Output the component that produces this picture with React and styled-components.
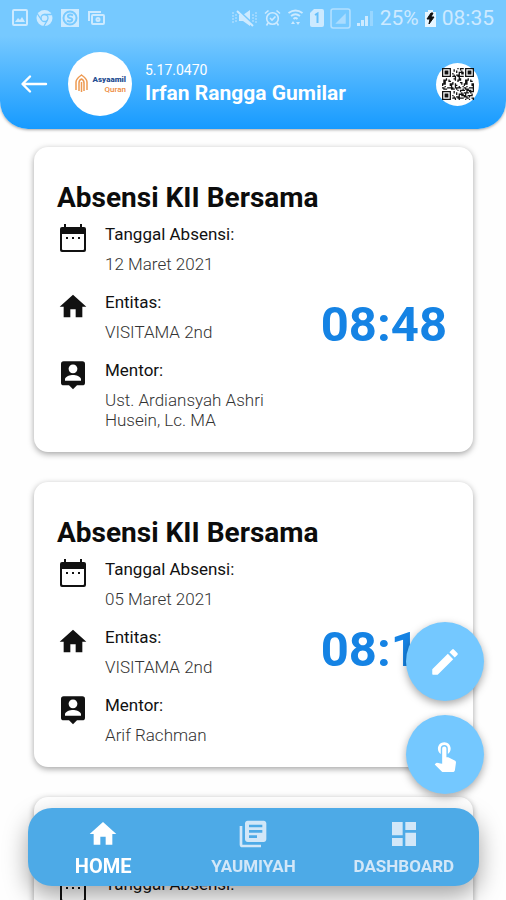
import React, { useState } from 'react';
import styled, { createGlobalStyle } from 'styled-components';
import { MdHome, MdDashboard, MdLibraryBooks, MdTouchApp } from 'react-icons/md';

const GlobalStyle = createGlobalStyle`
  * {
    box-sizing: border-box;
  }
  body {
    margin: 0;
    background: #fefefe;
    font-family: Roboto, "Liberation Sans", sans-serif;
  }
  button {
    font-family: inherit;
  }
`;

const Screen = styled.div`
  height: 100vh;
  display: flex;
  flex-direction: column;
  overflow: hidden;
`;

const Header = styled.header`
  padding-bottom: 13px;
  border-radius: 0 0 28px 28px;
  background: linear-gradient(#76c9ff 28%, #169aff);
  box-shadow: 0 1px 3px rgba(0, 0, 0, 0.35);
  color: #fff;
`;

const StatusBar = styled.div`
  display: flex;
  justify-content: space-between;
  align-items: center;
  height: 36px;
  padding: 0 12px;
  color: #cdeaff;
`;

const StatusGroup = styled.div`
  display: flex;
  align-items: center;
  gap: ${(props) => props.$gap}px;
`;

const StatusText = styled.span`
  font-size: 21px;
  line-height: 24px;
`;

const TopBar = styled.div`
  display: flex;
  align-items: center;
  padding: 16px 27px 0 20px;
`;

const IconButton = styled.button`
  display: flex;
  padding: 0;
  border: none;
  background: none;
  color: inherit;
  cursor: pointer;
`;

const Avatar = styled.div`
  display: flex;
  align-items: center;
  justify-content: center;
  width: 64px;
  height: 64px;
  margin: 0 13px 0 20px;
  border-radius: 50%;
  background: #fff;
`;

const User = styled.div`
  flex: 1;
`;

const UserId = styled.div`
  font-size: 14px;
  line-height: 18px;
`;

const UserName = styled.h1`
  margin: 0;
  font-size: 21px;
  font-weight: 700;
  line-height: 28px;
`;

const QrButton = styled(IconButton)`
  align-items: center;
  justify-content: center;
  width: 43px;
  height: 43px;
  border-radius: 50%;
  background: #fff;
  color: #111;
`;

const List = styled.main`
  flex: 1;
  min-height: 0;
  display: flex;
  flex-direction: column;
  gap: 30px;
  padding: 18px 33px 0 34px;
  overflow: hidden;
`;

const Card = styled.article`
  flex-shrink: 0;
  padding: 35px 26px 22px 23px;
  border-radius: 14px;
  background: #fff;
  box-shadow: 0 2px 6px rgba(0, 0, 0, 0.36);
`;

const CardTitle = styled.h2`
  margin: 0 0 5px;
  font-size: 28px;
  font-weight: 700;
  line-height: 32px;
  color: #0c0c0c;
`;

const CardBody = styled.div`
  display: flex;
  align-items: center;
  justify-content: space-between;
`;

const Details = styled.div`
  display: flex;
  flex-direction: column;
  gap: 18px;
  padding-top: 5px;
`;

const Detail = styled.div`
  display: flex;
  gap: 16px;
  color: #111;
`;

const DetailText = styled.dl`
  width: 180px;
  margin: 0;
  font-size: 17px;
  line-height: 20px;
`;

const Label = styled.dt`
  margin-bottom: 10px;
  color: #111;
`;

const Value = styled.dd`
  margin: 0;
  font-weight: 300;
  color: #333;
`;

const Time = styled.time`
  font-size: 49px;
  font-weight: 700;
  line-height: 60px;
  color: #1583e4;
`;

const Fabs = styled.div`
  position: fixed;
  right: 22px;
  bottom: 106px;
  display: flex;
  flex-direction: column;
  gap: 14px;
`;

const Fab = styled(IconButton)`
  align-items: center;
  justify-content: center;
  width: 78px;
  height: 79px;
  border-radius: 50%;
  background: #74c8ff;
  color: #fff;
  box-shadow: 0 3px 8px rgba(0, 0, 0, 0.35);
`;

const BottomNav = styled.nav`
  position: fixed;
  left: 28px;
  right: 27px;
  bottom: 14px;
  display: flex;
  height: 78px;
  border-radius: 24px;
  background: #4daae7;
  box-shadow: 0 10px 24px rgba(0, 0, 0, 0.36);
`;

const Tab = styled.button`
  flex: 1;
  display: flex;
  flex-direction: column;
  align-items: center;
  gap: 4px;
  padding: 10px 0 0;
  border: none;
  background: none;
  color: ${(props) => (props.$active ? '#fff' : '#d2e7f8')};
  font-size: ${(props) => (props.$active ? 20 : 17)}px;
  font-weight: 700;
  line-height: 24px;
  cursor: pointer;
`;

const records = [
  { id: 1, date: '12 Maret 2021', entity: 'VISITAMA 2nd', mentor: 'Ust. Ardiansyah Ashri Husein, Lc. MA', time: '08:48' },
  { id: 2, date: '05 Maret 2021', entity: 'VISITAMA 2nd', mentor: 'Arif Rachman', time: '08:17' },
  { id: 3, date: '26 Februari 2021', entity: 'VISITAMA 2nd', mentor: 'Arif Rachman', time: '08:30' },
];

const tabs = [
  { name: 'HOME', Icon: MdHome },
  { name: 'YAUMIYAH', Icon: MdLibraryBooks },
  { name: 'DASHBOARD', Icon: MdDashboard },
];

const CalendarIcon = () => (
  <svg width="32" height="32" viewBox="0 0 32 32" fill="currentColor" aria-hidden="true">
    <path d="M7 0h2v3h14V0h2v3h2q2 0 2 2v21q0 2-2 2H5q-2 0-2-2V5q0-2 2-2h2zM5 10v15q0 1 1 1h20q1 0 1-1V10z" fillRule="evenodd" />
    <path d="M9 13h2v2H9zM15 13h2v2h-2zM21 13h2v2h-2z" />
  </svg>
);

const HomeIcon = () => (
  <svg width="32" height="32" viewBox="0 0 24 24" fill="currentColor" aria-hidden="true">
    <path d="M10 19v-6h4v6h5v-8h3L12 2 2 11h3v8z" />
  </svg>
);

const PersonPinIcon = () => (
  <svg width="32" height="32" viewBox="0 0 24 24" fill="currentColor" aria-hidden="true">
    <path d="M19 1H5a2 2 0 0 0-2 2v14a2 2 0 0 0 2 2h4l3 3 3-3h4a2 2 0 0 0 2-2V3a2 2 0 0 0-2-2zm-7 2.300c1.900 0 3.300 1.500 3.300 3.300S13.900 10 12 10 8.700 8.500 8.700 6.600 10.100 3.300 12 3.300zM18 15.500H6v-1c0-2.200 4-3.300 6-3.300s6 1.100 6 3.300z" />
  </svg>
);

const PencilIcon = () => (
  <svg width="34" height="34" viewBox="0 0 24 24" fill="currentColor" aria-hidden="true">
    <path d="M3 17.500v3q0 .5.500.5h3q.3 0 .5-.2L17.800 10 14 6.200 3.200 17q-.2.200-.2.500zM20.700 7.100a1 1 0 0 0 0-1.500l-2.300-2.300a1 1 0 0 0-1.500 0L15.100 5.100l3.800 3.800z" />
  </svg>
);

const BackIcon = () => (
  <svg width="28" height="28" viewBox="0 0 28 28" fill="none" stroke="currentColor" strokeWidth="2.400" strokeLinecap="round" strokeLinejoin="round" aria-hidden="true">
    <path d="M26 14H3M10 6.500L2.500 14L10 21.500" />
  </svg>
);

const Logo = () => (
  <svg width="56" height="28" viewBox="0 0 56 28" role="img" aria-label="Asyaamil Quran">
    <g fill="none" stroke="#ee9a52" strokeWidth="1.500">
      <path d="M4 20V12Q4 9 9.500 5Q15 9 15 12V20" />
      <path d="M7 21V13Q7 10 9.500 9Q12 10 12 13V21M9.500 12V22" />
    </g>
    <text x="54" y="12" textAnchor="end" fontSize="8" fontWeight="900" fill="#1f4e92">Asyaamil</text>
    <text x="54" y="22" textAnchor="end" fontSize="8" fontWeight="500" fill="#ee8a3c">Quran</text>
  </svg>
);

const QR_SIZE = 25;

// the three finder squares, then a fixed scatter of modules for the rest
const isDark = (x, y) => {
  const corners = [[0, 0], [QR_SIZE - 7, 0], [0, QR_SIZE - 7]];
  for (const [cx, cy] of corners) {
    const dx = x - cx;
    const dy = y - cy;
    if (dx >= -1 && dx <= 7 && dy >= -1 && dy <= 7) {
      const ring = Math.max(Math.abs(dx - 3), Math.abs(dy - 3));
      return ring === 3 || ring <= 1;
    }
  }
  return ((x * x * 7 + y * y * 13 + x * y * 5 + x * 3) % 17) < 8;
};

const QrIcon = () => {
  let d = '';
  for (let y = 0; y < QR_SIZE; y++) {
    for (let x = 0; x < QR_SIZE; x++) {
      if (isDark(x, y)) d += `M${x} ${y}h1v1h-1z`;
    }
  }
  return (
    <svg width="32" height="32" viewBox="0 0 25 25" fill="currentColor" aria-hidden="true">
      <path d={d} />
    </svg>
  );
};

const NotificationIcons = () => (
  <>
    <svg width="16" height="18" viewBox="0 0 16 18" fill="none" stroke="currentColor" strokeWidth="2">
      <rect x="1" y="1" width="14" height="15" rx="1" />
      <path d="M3 13l3-4 2 2 2-3 3 5z" fill="currentColor" stroke="none" />
    </svg>
    <svg width="17" height="18" viewBox="0 0 17 18">
      <circle cx="8.500" cy="9" r="8" fill="currentColor" />
      <g fill="none" stroke="#76c9ff" strokeWidth="1.300">
        <circle cx="8.500" cy="9" r="3.500" />
        <path d="M8.500 5.500H16M5.500 11L1.500 5M11.500 11L8 17" />
      </g>
    </svg>
    <svg width="18" height="18" viewBox="0 0 18 18">
      <rect width="18" height="18" fill="currentColor" />
      <circle cx="9" cy="9" r="6.500" fill="none" stroke="#76c9ff" strokeWidth="2" />
      <path d="M12 6.500Q9 4.500 7 6.500Q6.500 8.500 9 9Q12 9.500 11 11.500Q9 13.500 6 11.500" fill="none" stroke="#76c9ff" strokeWidth="2" />
    </svg>
    <svg width="18" height="16" viewBox="0 0 18 16" fill="none" stroke="currentColor" strokeWidth="2">
      <path d="M2 11V2H14" />
      <rect x="5" y="5" width="12" height="9" rx="1" />
      <circle cx="11" cy="9.500" r="1.500" />
    </svg>
  </>
);

const SystemIcons = () => (
  <>
    <svg width="26" height="18" viewBox="0 0 26 18" fill="currentColor">
      <path d="M7 6h4l7-5v16l-7-5H7z" />
      <path d="M1 3v12M4 5v8M21 5v8M24 3v12" fill="none" stroke="currentColor" strokeWidth="1.500" strokeDasharray="2 1" opacity="0.600" />
      <path d="M6 1L22 16" stroke="#76c9ff" strokeWidth="2" />
      <path d="M5 2L21 17" stroke="currentColor" strokeWidth="2" />
    </svg>
    <svg width="17" height="18" viewBox="0 0 17 18" fill="none" stroke="currentColor" strokeWidth="1.600">
      <circle cx="8.500" cy="9.500" r="5.800" />
      <path d="M6 9l2 2 3.500-3.500M1 4.500L4.500 1.500M16 4.500L12.500 1.500M4 14L2.500 16.500M13 14L14.500 16.500" />
    </svg>
    <svg width="17" height="18" viewBox="0 0 17 18" fill="none" stroke="currentColor" strokeWidth="1.800">
      <path d="M1.500 4Q8.500-1 15.500 4M4 7Q8.500 3.500 13 7M6.500 10Q8.500 8 10.500 10" />
      <path d="M4 15l2-3 2 3zM9 13l2 3 2-3z" fill="currentColor" stroke="none" />
    </svg>
    <svg width="14" height="18" viewBox="0 0 14 18">
      <path d="M4 0h8q2 0 2 2v14q0 2-2 2H2q-2 0-2-2V4z" fill="currentColor" />
      <path d="M5 6L7.500 4.500V14" fill="none" stroke="#65bffb" strokeWidth="2" />
    </svg>
    <svg width="21" height="21" viewBox="0 0 20 20">
      <rect x="1" y="1" width="18" height="18" rx="2" fill="none" stroke="currentColor" strokeWidth="1.500" opacity="0.700" />
      <path d="M5 15L15 5V15z" fill="currentColor" opacity="0.600" />
    </svg>
    <svg width="17" height="18" viewBox="0 0 17 18" fill="currentColor">
      <path d="M0 17v-3h3v3zM4 17v-6h3v6zM8 17V7h3v10z" />
      <path d="M13 17V2h3v15z" opacity="0.400" />
    </svg>
  </>
);

const BatteryIcon = () => (
  <svg width="11" height="17" viewBox="0 0 11 17">
    <path d="M3 0h5v2h3v15H0V2h3z" fill="#e6f5ff" />
    <path d="M6 3L2 9h3L4 14L9 7H6L8 3z" fill="#111" stroke="#111" />
  </svg>
);

const DetailRow = ({ icon, label, value }) => (
  <Detail>
    {icon}
    <DetailText>
      <Label>{label}</Label>
      <Value>{value}</Value>
    </DetailText>
  </Detail>
);

const RecordCard = ({ record }) => (
  <Card>
    <CardTitle>Absensi KII Bersama</CardTitle>
    <CardBody>
      <Details>
        <DetailRow icon={<CalendarIcon />} label="Tanggal Absensi:" value={record.date} />
        <DetailRow icon={<HomeIcon />} label="Entitas:" value={record.entity} />
        <DetailRow icon={<PersonPinIcon />} label="Mentor:" value={record.mentor} />
      </Details>
      <Time>{record.time}</Time>
    </CardBody>
  </Card>
);

const App = () => {
  const [active, setActive] = useState('HOME');

  return (
    <Screen>
      <GlobalStyle />
      <Header>
        <StatusBar>
          <StatusGroup $gap={8}>
            <NotificationIcons />
          </StatusGroup>
          <StatusGroup $gap={6}>
            <SystemIcons />
            <StatusText>25%</StatusText>
            <BatteryIcon />
            <StatusText>08:35</StatusText>
          </StatusGroup>
        </StatusBar>
        <TopBar>
          <IconButton aria-label="Kembali">
            <BackIcon />
          </IconButton>
          <Avatar>
            <Logo />
          </Avatar>
          <User>
            <UserId>5.17.0470</UserId>
            <UserName>Irfan Rangga Gumilar</UserName>
          </User>
          <QrButton aria-label="Kode QR">
            <QrIcon />
          </QrButton>
        </TopBar>
      </Header>
      <List>
        {records.map((record) => (
          <RecordCard key={record.id} record={record} />
        ))}
      </List>
      <BottomNav>
        {tabs.map(({ name, Icon }) => (
          <Tab key={name} $active={active === name} onClick={() => setActive(name)}>
            <Icon size={32} />
            {name}
          </Tab>
        ))}
      </BottomNav>
      <Fabs>
        <Fab aria-label="Tulis">
          <PencilIcon />
        </Fab>
        <Fab aria-label="Absen">
          <MdTouchApp size={34} />
        </Fab>
      </Fabs>
    </Screen>
  );
};

export default App;
